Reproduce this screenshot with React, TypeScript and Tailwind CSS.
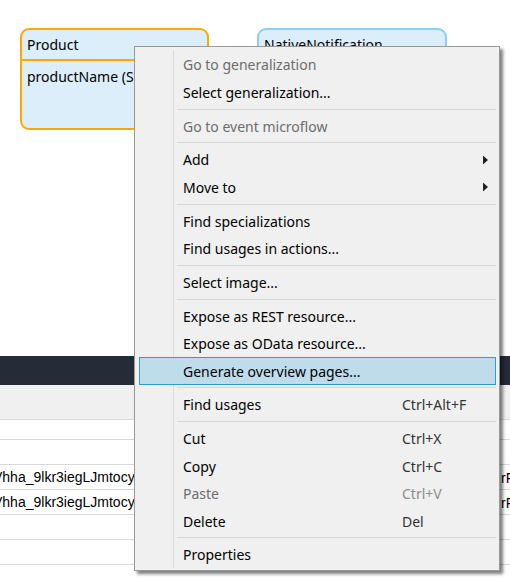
import React from "react";

type Item =
  | { type: "sep" }
  | {
      type?: "item";
      label: string;
      shortcut?: string;
      disabled?: boolean;
      submenu?: boolean;
      active?: boolean;
    };

const items: Item[] = [
  { label: "Go to generalization", disabled: true },
  { label: "Select generalization..." },
  { type: "sep" },
  { label: "Go to event microflow", disabled: true },
  { type: "sep" },
  { label: "Add", submenu: true },
  { label: "Move to", submenu: true },
  { type: "sep" },
  { label: "Find specializations" },
  { label: "Find usages in actions..." },
  { type: "sep" },
  { label: "Select image..." },
  { type: "sep" },
  { label: "Expose as REST resource..." },
  { label: "Expose as OData resource..." },
  { label: "Generate overview pages...", active: true },
  { type: "sep" },
  { label: "Find usages", shortcut: "Ctrl+Alt+F" },
  { type: "sep" },
  { label: "Cut", shortcut: "Ctrl+X" },
  { label: "Copy", shortcut: "Ctrl+C" },
  { label: "Paste", shortcut: "Ctrl+V", disabled: true },
  { label: "Delete", shortcut: "Del" },
  { type: "sep" },
  { label: "Properties" },
];

function Entity({
  title,
  attr,
  border,
  width,
}: {
  title: string;
  attr?: string;
  border: string;
  width: string;
}) {
  return (
    <div
      className={`${width} h-[102px] rounded-[9px] border-2 ${border} bg-[#dbeefa] overflow-hidden flex flex-col`}
    >
      <div className={`h-[31px] shrink-0 flex items-center pl-[5px] border-b-2 ${border} text-[14px] text-black`}>
        {title}
      </div>
      {attr && (
        <div className="pl-[5px] pt-[5px] text-[14px] text-black whitespace-nowrap">{attr}</div>
      )}
    </div>
  );
}

function Row({ text, right }: { text?: string; right?: string }) {
  return (
    <div className="h-[25px] shrink-0 border-b border-[#d9d9d9] flex items-center relative overflow-hidden whitespace-nowrap font-['Liberation_Sans',Arial,sans-serif] text-[14px] text-black">
      {text && <span className="ml-[-7px]">{text}</span>}
      {right && <span className="absolute left-[501px] top-[3px]">{right}</span>}
    </div>
  );
}

export default function App() {
  return (
    <div className="relative w-[510px] h-[579px] overflow-hidden bg-white font-['Noto_Sans',sans-serif]">
      {/* canvas */}
      <div className="h-[356px] flex gap-[48px] pl-[20px] pt-[28px]">
        <Entity title="Product" attr="productName (String)" border="border-[#ffa800]" width="w-[189px]" />
        <Entity title="NativeNotification" border="border-[#8ccff2]" width="w-[190px]" />
      </div>
      {/* bottom panel */}
      <div className="h-[29px] bg-[#262b38]" />
      <div className="h-[35px] bg-[#f0f0f0] border-b border-[#d9d9d9]" />
      <div className="flex flex-col">
        <div className="h-[20px] border-b border-[#d9d9d9]" />
        <Row />
        <Row text="Vhha_9lkr3iegLJmtocy" right="rF" />
        <Row text="Vhha_9lkr3iegLJmtocy" right="rF" />
        <Row />
        <Row />
        <Row />
      </div>

      {/* context menu */}
      <div className="absolute left-[134px] top-[46px] w-[366px] border border-[#999999] bg-[#f0f0f0] shadow-[3px_3px_3px_rgba(0,0,0,0.5)] pl-[4px] pr-[3px] pt-[4px] pb-[1px] text-[14px]">
        <div className="absolute left-[38px] top-[3px] bottom-[2px] w-px bg-[#dcdcdc]" />
        <div className="relative flex flex-col">
          {items.map((it, i) =>
            it.type === "sep" ? (
              <div key={i} className="h-[6.25px] flex items-center pl-[38px]">
                <div className="h-px w-full bg-[#d7d7d7]" />
              </div>
            ) : (
              <div
                key={i}
                className={`relative h-[27.5px] flex items-center border whitespace-nowrap ${
                  it.active ? "border-[#26a0da] bg-[#bfdceb]" : "border-transparent"
                }`}
              >
                <span
                  className={`w-[262px] shrink-0 pl-[43px] ${
                    it.disabled ? "text-[#6d6d6d]" : "text-[#000000]"
                  }`}
                >
                  {it.label}
                </span>
                {it.shortcut && (
                  <span className={it.disabled ? "text-[#8c8c8c]" : "text-[#333333]"}>
                    {it.shortcut}
                  </span>
                )}
                {it.submenu && (
                  <svg
                    className="absolute right-[7px] top-1/2 -translate-y-1/2"
                    width="5"
                    height="9"
                    viewBox="0 0 5 9"
                  >
                    <path d="M0 0 L5 4.5 L0 9 Z" fill="#222222" />
                  </svg>
                )}
              </div>
            )
          )}
        </div>
      </div>
    </div>
  );
}
